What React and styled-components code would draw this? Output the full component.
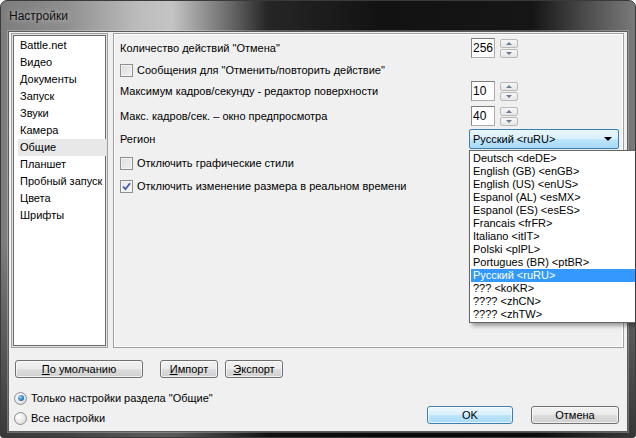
import React from "react";
import styled, { createGlobalStyle, css } from "styled-components";

const GlobalStyle = createGlobalStyle`
  html, body {
    margin: 0;
    padding: 0;
    background: #ffffff;
    overflow: hidden;
  }
  * {
    box-sizing: border-box;
  }
`;

const sections = [
  "Battle.net",
  "Видео",
  "Документы",
  "Запуск",
  "Звуки",
  "Камера",
  "Общие",
  "Планшет",
  "Пробный запуск",
  "Цвета",
  "Шрифты",
];

const regions = [
  "Deutsch <deDE>",
  "English (GB) <enGB>",
  "English (US) <enUS>",
  "Espanol (AL) <esMX>",
  "Espanol (ES) <esES>",
  "Francais <frFR>",
  "Italiano <itIT>",
  "Polski <plPL>",
  "Portugues (BR) <ptBR>",
  "Русский <ruRU>",
  "??? <koKR>",
  "???? <zhCN>",
  "???? <zhTW>",
];

const App = () => {
  return (
    <>
      <GlobalStyle />
      <Window>
        <TitleBar>Настройки</TitleBar>
        <Client>
          <TopRow>
            <ListBox>
              {sections.map((s) => (
                <ListItem key={s} $selected={s === "Общие"}>
                  {s}
                </ListItem>
              ))}
            </ListBox>

            <Panel>
              <Row $mt={0}>
                <Label>Количество действий "Отмена"</Label>
                <Spinner value="256" />
              </Row>
              <Row $mt={2}>
                <CheckRow>
                  <CheckBox />
                  Сообщения для "Отменить/повторить действие"
                </CheckRow>
              </Row>
              <Row $mt={1}>
                <Label>Максимум кадров/секунду - редактор поверхности</Label>
                <Spinner value="10" />
              </Row>
              <Row $mt={5}>
                <Label>Макс. кадров/сек. – окно предпросмотра</Label>
                <Spinner value="40" />
              </Row>
              <Row $mt={3}>
                <Label>Регион</Label>
                <Combo>
                  <span>Русский &lt;ruRU&gt;</span>
                  <ComboArrow />
                </Combo>
              </Row>
              <Row $mt={4}>
                <CheckRow>
                  <CheckBox />
                  Отключить графические стили
                </CheckRow>
              </Row>
              <Row $mt={3}>
                <CheckRow>
                  <CheckBox $checked>
                    <svg width="9" height="9" viewBox="0 0 9 9">
                      <path
                        d="M1 4.5 L3.5 7.2 L8 1.2"
                        fill="none"
                        stroke="#3f5aa0"
                        strokeWidth="1.8"
                      />
                    </svg>
                  </CheckBox>
                  Отключить изменение размера в реальном времени
                </CheckRow>
              </Row>
            </Panel>
          </TopRow>

          <ButtonRow>
            <Button $w={128}>
              <u>П</u>о умолчанию
            </Button>
            <Button $w={58} $ml={17}>
              <u>И</u>мпорт
            </Button>
            <Button $w={58} $ml={7}>
              <u>Э</u>кспорт
            </Button>
          </ButtonRow>

          <BottomRow>
            <Radios>
              <RadioRow>
                <Radio $on />
                Только настройки раздела "Общие"
              </RadioRow>
              <RadioRow>
                <Radio />
                Все настройки
              </RadioRow>
            </Radios>
            <DialogButtons>
              <Button $w={86} $primary>
                OK
              </Button>
              <Button $w={88}>Отмена</Button>
            </DialogButtons>
          </BottomRow>

          <DropList>
            {regions.map((r) => (
              <DropItem key={r} $active={r === "Русский <ruRU>"}>
                {r}
              </DropItem>
            ))}
          </DropList>
        </Client>
      </Window>
    </>
  );
};

const Spinner = ({ value }) => {
  return (
    <SpinWrap>
      <SpinInput>{value}</SpinInput>
      <SpinButtons>
        <SpinBtn>
          <Tri $up />
        </SpinBtn>
        <SpinBtn>
          <Tri />
        </SpinBtn>
      </SpinButtons>
    </SpinWrap>
  );
};

const uiFont = css`
  font-family: "Liberation Sans", Arial, sans-serif;
  font-size: 11px;
  color: #000;
`;

const Window = styled.div`
  position: relative;
  width: 636px;
  height: 438px;
  overflow: hidden;
  border-radius: 7px 7px 3px 3px;
  border: 1px solid #3a3a3a;
  display: flex;
  flex-direction: column;
  padding: 0 7px 5px 7px;
  background:
    linear-gradient(180deg, rgba(0, 0, 0, 0) 0%, rgba(0, 0, 0, 0) 55%, rgba(0, 0, 0, 0.55) 100%),
    linear-gradient(
      90deg,
      #7c7c7c 0%,
      #8e8e8e 10%,
      #bdbdbd 22%,
      #c4c4c4 27%,
      #6a6a6a 36%,
      #262626 42%,
      #121212 60%,
      #161616 84%,
      #4a4a4a 92%,
      #7a7a7a 100%
    );
`;

const TitleBar = styled.div`
  height: 30px;
  display: flex;
  align-items: center;
  padding-left: 1px;
  font-family: "Liberation Sans", Arial, sans-serif;
  font-size: 12px;
  color: #111;
  text-shadow: 0 0 6px rgba(255, 255, 255, 0.6);
`;

const Client = styled.div`
  position: relative;
  flex: 1;
  display: flex;
  flex-direction: column;
  background: #f0f0f0;
  border: 1px solid #5c5c5c;
  box-shadow: 0 0 0 1px rgba(255, 255, 255, 0.25);
  padding: 1px 3px 0 2px;
  ${uiFont};
`;

const TopRow = styled.div`
  display: flex;
  gap: 5px;
  height: 315px;
`;

const ListBox = styled.div`
  flex: none;
  width: 97px;
  overflow: hidden;
  background: #fff;
  border: 1px solid #a0a0a0;
  box-shadow: inset 0 0 0 1px #e3e3e3, inset 0 0 0 2px #696969;
  padding: 3px 1px 0 6px;
`;

const ListItem = styled.div`
  height: 17px;
  line-height: 17px;
  padding-left: 2px;
  white-space: nowrap;
  background: ${(p) => (p.$selected ? "#e8e8e8" : "transparent")};
`;

const Panel = styled.div`
  flex: 1;
  min-width: 0;
  border: 1px solid #a0a0a0;
  box-shadow: inset 0 0 0 1px #ffffff;
  padding: 4px 6px 0 6px;
`;

const Row = styled.div`
  display: grid;
  grid-template-columns: 349px auto;
  align-items: center;
  height: 20px;
  margin-top: ${(p) => p.$mt}px;
`;

const Label = styled.div`
  white-space: nowrap;
`;

const CheckRow = styled.div`
  display: flex;
  align-items: center;
  gap: 4px;
  white-space: nowrap;
`;

const CheckBox = styled.span`
  width: 13px;
  height: 13px;
  flex: none;
  border: 1px solid #8e8f8f;
  background: linear-gradient(135deg, #dcdcdc 0%, #f2f2f2 100%);
  box-shadow: inset 0 0 0 1px #f4f4f4;
  display: flex;
  align-items: center;
  justify-content: center;
  ${(p) =>
    p.$checked &&
    css`
      background: linear-gradient(135deg, #e6e6e6 0%, #fafafa 100%);
    `}
`;

const SpinWrap = styled.div`
  display: flex;
  align-items: center;
  margin-left: 2px;
  gap: 5px;
`;

const SpinInput = styled.div`
  width: 24px;
  height: 20px;
  background: #fff;
  border: 1px solid #abadb3;
  border-top-color: #7a7a7a;
  border-left-color: #8a8a8a;
  padding-left: 1px;
  line-height: 18px;
  font-size: 12px;
`;

const SpinButtons = styled.div`
  display: flex;
  flex-direction: column;
  gap: 1px;
`;

const SpinBtn = styled.div`
  width: 18px;
  height: 9px;
  border: 1px solid #b9b9b9;
  border-radius: 2px;
  background: linear-gradient(180deg, #f6f6f6 0%, #e6e6e6 100%);
  display: flex;
  align-items: center;
  justify-content: center;
`;

const Tri = styled.span`
  width: 0;
  height: 0;
  border-left: 3px solid transparent;
  border-right: 3px solid transparent;
  ${(p) =>
    p.$up
      ? css`
          border-bottom: 3px solid #6a7b98;
        `
      : css`
          border-top: 3px solid #6a7b98;
        `}
`;

const Combo = styled.div`
  width: 150px;
  height: 20px;
  border: 1px solid #3c7fb1;
  border-radius: 2px;
  background: linear-gradient(180deg, #eaf6fd 0%, #d9f0fc 48%, #bee6fd 52%, #a7d9f5 100%);
  display: flex;
  align-items: center;
  justify-content: space-between;
  padding: 0 6px 0 3px;
  white-space: nowrap;
`;

const ComboArrow = styled.span`
  width: 0;
  height: 0;
  border-left: 4px solid transparent;
  border-right: 4px solid transparent;
  border-top: 4px solid #000;
`;

const DropList = styled.div`
  position: absolute;
  left: 460px;
  top: 118px;
  width: 180px;
  background: #fff;
  border: 1px solid #646464;
  padding: 1px 0 1px 1px;
  box-shadow: 3px 3px 4px rgba(0, 0, 0, 0.35);
  z-index: 2;
`;

const DropItem = styled.div`
  height: 13px;
  line-height: 13px;
  padding-left: 2px;
  white-space: nowrap;
  background: ${(p) => (p.$active ? "#3399ff" : "transparent")};
  color: ${(p) => (p.$active ? "#fff" : "#000")};
`;

const ButtonRow = styled.div`
  display: flex;
  align-items: center;
  margin-top: 12px;
  padding-left: 4px;
`;

const Button = styled.div`
  width: ${(p) => p.$w}px;
  margin-left: ${(p) => p.$ml || 0}px;
  height: 18px;
  border: 1px solid ${(p) => (p.$primary ? "#3c7fb1" : "#707070")};
  border-radius: 3px;
  background: ${(p) =>
    p.$primary
      ? "linear-gradient(180deg, #eaf6fd 0%, #d9f0fc 48%, #bee6fd 52%, #a7d9f5 100%)"
      : "linear-gradient(180deg, #f2f2f2 0%, #ebebeb 48%, #dddddd 52%, #cfcfcf 100%)"};
  box-shadow: inset 0 0 0 1px rgba(255, 255, 255, 0.7);
  display: flex;
  align-items: center;
  justify-content: center;
  white-space: nowrap;
`;

const BottomRow = styled.div`
  flex: 1;
  display: flex;
  justify-content: space-between;
  align-items: flex-end;
  padding: 0 5px 7px 3px;
`;

const Radios = styled.div`
  display: flex;
  flex-direction: column;
  margin-bottom: -4px;
`;

const RadioRow = styled.div`
  display: flex;
  align-items: center;
  gap: 4px;
  height: 20px;
  white-space: nowrap;
`;

const Radio = styled.span`
  width: 13px;
  height: 13px;
  border-radius: 50%;
  border: 1px solid #8e8f8f;
  background: radial-gradient(circle at 35% 35%, #ffffff 0%, #e0e0e0 70%, #cfcfcf 100%);
  position: relative;
  flex: none;
  ${(p) =>
    p.$on &&
    css`
      &::after {
        content: "";
        position: absolute;
        left: 2.5px;
        top: 2.5px;
        width: 6px;
        height: 6px;
        border-radius: 50%;
        background: radial-gradient(circle at 35% 35%, #9bd4f7 0%, #2a79c4 60%, #1c4f8f 100%);
      }
    `}
`;

const DialogButtons = styled.div`
  display: flex;
  gap: 18px;
`;

export default App;
